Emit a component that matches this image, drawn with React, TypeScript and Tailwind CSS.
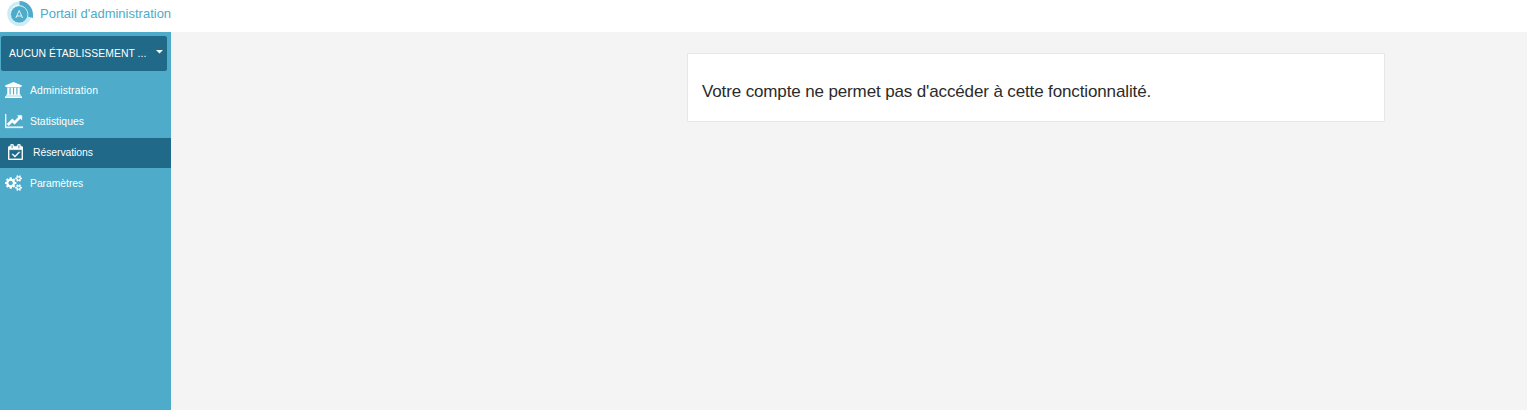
import type { ReactNode } from "react";

function Icon({ viewBox, className, children }: { viewBox: string; className: string; children: ReactNode }) {
  return (
    <svg viewBox={viewBox} className={`shrink-0 ${className}`} fill="currentColor" aria-hidden="true">
      {children}
    </svg>
  );
}

const BANK =
  "M960 0l960 384v128h-128q0 26-20.500 45t-48.500 19h-1526q-28 0-48.500-19t-20.500-45h-128v-128zm-704 640h256v768h128v-768h256v768h128v-768h256v768h128v-768h256v768h59q28 0 48.500 19t20.500 45v64h-1664v-64q0-26 20.500-45t48.500-19h59v-768zm1595 960q28 0 48.500 19t20.500 45v128h-1920v-128q0-26 20.500-45t48.500-19h1782z";
const CHART =
  "M2048 1536v128h-2048v-1536h128v1408h1920zm-128-1248v435q0 21-19.500 29.500t-35.500-7.500l-121-121-633 633q-10 10-23 10t-23-10l-233-233-416 416-192-192 585-585q10-10 23-10t23 10l233 233 464-464-121-121q-16-16-7.500-35.500t29.500-19.500h435q14 0 23 9t9 23z";
const CALENDAR =
  "M1303 964l-512 512q-10 9-23 9t-23-9l-288-288q-9-10-9-23t9-22l46-46q9-9 22-9t23 9l220 220 444-444q10-9 23-9t22 9l46 46q9 9 9 22t-9 23zm-1175 700h1408v-1024h-1408v1024zm384-1216v-288q0-14-9-23t-23-9h-64q-14 0-23 9t-9 23v288q0 14 9 23t23 9h64q14 0 23-9t9-23zm768 0v-288q0-14-9-23t-23-9h-64q-14 0-23 9t-9 23v288q0 14 9 23t23 9h64q14 0 23-9t9-23zm384-64v1280q0 52-38 90t-90 38h-1408q-52 0-90-38t-38-90v-1280q0-52 38-90t90-38h128v-96q0-66 47-113t113-47h64q66 0 113 47t47 113v96h384v-96q0-66 47-113t113-47h64q66 0 113 47t47 113v96h128q52 0 90 38t38 90z";
const LARGE_COG =
  "M896 896q0-106-75-181t-181-75-181 75-75 181 75 181 181 75 181-75 75-181zM1280 805v185q0 10-7 19.500t-16 10.500l-155 24q-11 35-32 76 34 48 90 115 7 11 7 20 0 12-7 19-23 30-82.500 89.500t-78.500 59.500q-11 0-21-7l-115-90q-37 19-77 31-11 108-23 155-7 24-30 24h-186q-11 0-20-7.500t-10-17.500l-23-153q-34-10-75-31l-118 89q-7 7-20 7-11 0-21-8-144-133-144-160 0-9 7-19 10-14 41-53t47-61q-23-44-35-82l-152-24q-10-1-17-9.500t-7-19.500v-185q0-10 7-19.500t16-10.500l155-24q11-35 32-76-34-48-90-115-7-11-7-20 0-12 7-20 22-30 82-89t79-59q11 0 21 7l115 90q34-18 77-32 11-108 23-154 7-24 30-24h186q11 0 20 7.500t10 17.500l23 153q34 10 75 31l118-89q8-7 20-7 11 0 21 8 144 133 144 160 0 8-7 19-12 16-42 54t-45 60q23 48 34 82l152 23q10 2 17 10.500t7 19.500z";
const SMALL_COG =
  "M1664 1408q0-52-38-90t-90-38-90 38-38 90q0 53 37.500 90.500t90.500 37.500 90.500-37.500 37.500-90.500zM1920 1338v140q0 16-149 31-12 27-30 52 51 113 51 138 0 4-4 7-122 71-124 71-8 0-46-47t-52-68q-20 2-30 2t-30-2q-14 21-52 68t-46 47q-2 0-124-71-4-3-4-7 0-25 51-138-18-25-30-52-149-15-149-31v-140q0-16 149-31 13-29 30-52-51-113-51-138 0-4 4-7 4-2 35-20t59-34 30-16q8 0 46 46.500t52 67.500q20-2 30-2t30 2q51-71 92-112l6-2q4 0 124 70 4 3 4 7 0 25-51 138 17 23 30 52 149 15 149 31z";

export default function App() {
  return (
    <div className="flex h-[410px] flex-col bg-[#f4f4f4] font-['Liberation_Sans',sans-serif]">
      <header className="flex h-8 items-start bg-white pl-[7px]">
        <svg className="mt-px h-[26px] w-[26px]" viewBox="0 0 26 26" aria-hidden="true">
          <circle cx="12.500" cy="12.700" r="10.800" fill="#fff" stroke="#c9edf5" strokeWidth="3" />
          <path d="M12.500 0C20 0 26 6 26 13.500V17L20.500 15.500A8.800 8.800 0 0 0 12.500 4.500Z" fill="#4eabc9" />
          <circle cx="12.200" cy="13.400" r="8.700" fill="#4eabc9" stroke="#d9f2f8" strokeWidth="0.8" />
          <path d="M8.800 17L12.200 9.500L15.600 17M10 15H14.400" fill="none" stroke="#e4f5fa" strokeWidth="1" />
        </svg>
        <span className="ml-[7px] mt-[6px] text-[13px] leading-4 text-[#4eabc9]">Portail d'administration</span>
      </header>
      <div className="flex flex-1">
        <aside className="w-[171px] bg-[#4eabc9] pt-1 text-[10.4px] leading-[15px] text-white">
          <button className="ml-px flex h-[35px] w-[166px] items-center justify-between rounded-[2px] bg-[#206988] pl-2 pr-1">
            <span className="whitespace-nowrap tracking-[0.04px]">AUCUN ÉTABLISSEMENT ...</span>
            <Icon viewBox="0 0 7 4" className="mb-1 h-[4px] w-[7px]"><path d="M0 0H7L3.500 3.500Z" /></Icon>
          </button>
          <nav className="mt-1">
            <a className="flex h-[31px] items-center pl-[5px]">
              <Icon viewBox="0 0 1920 1792" className="mb-[2px] mr-2 h-4 w-[17px]"><path d={BANK} /></Icon>
              <span className="tracking-[0.16px]">Administration</span>
            </a>
            <a className="flex h-[31px] items-center pl-[5px]">
              <Icon viewBox="0 0 2048 1792" className="mb-[2px] mr-[7px] h-4 w-[18px]">
                <path d={CHART} stroke="currentColor" strokeWidth="50" />
              </Icon>
              <span className="tracking-[0.02px]">Statistiques</span>
            </a>
            <a className="mt-px flex h-[30px] items-center bg-[#206988] pb-px pl-2">
              <Icon viewBox="0 0 1664 1792" className="mb-px mr-[10px] h-4 w-[15px]">
                <path d={CALENDAR} stroke="currentColor" strokeWidth="40" />
              </Icon>
              <span className="tracking-[-0.06px]">Réservations</span>
            </a>
            <a className="flex h-[31px] items-center pl-[5px]">
              <Icon viewBox="0 0 1920 1792" className="mb-[2px] mr-2 h-4 w-[17px]">
                <path d={LARGE_COG} />
                <path d={SMALL_COG} />
                <path d={SMALL_COG} transform="translate(0 -1024)" />
              </Icon>
              <span className="tracking-[-0.05px]">Paramètres</span>
            </a>
          </nav>
        </aside>
        <main className="flex-1 pl-[516px] pt-[21px]">
          <div className="h-[69px] w-[698px] rounded-[1px] border border-[#e7e7e7] bg-white pl-[14px] pt-7 text-[17px] leading-5 tracking-[-0.13px] text-[#2b2b2b]">
            Votre compte ne permet pas d'accéder à cette fonctionnalité.
          </div>
        </main>
      </div>
    </div>
  );
}
